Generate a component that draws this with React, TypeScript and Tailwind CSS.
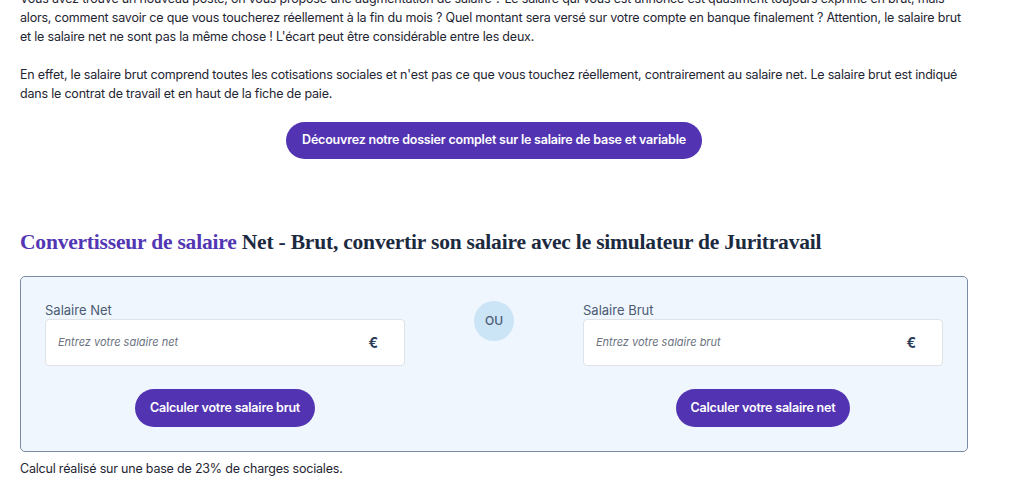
const body = "font-['Inter','Liberation_Sans',sans-serif]";

const SalaryField = ({ label, placeholder, action }: { label: string; placeholder: string; action: string }) => (
  <div className="flex w-[360px] flex-col">
    <label className="text-[13px] leading-[17px] text-[#4b5a74]">{label}</label>
    <div className="flex h-[47px] items-center justify-between rounded-[4px] border border-[#dfe3e8] bg-white pl-[12px] pr-[26px]">
      <span className="text-[11px] italic text-[#6b7280]">{placeholder}</span>
      <span className="text-[14px] font-bold text-[#2d3d5a]">€</span>
    </div>
    <button className="mx-auto mt-[23px] h-[38px] rounded-full bg-[#5234b2] px-[15px] text-[12.5px] font-semibold tracking-[-0.2px] text-white">
      {action}
    </button>
  </div>
);

export default function App() {
  return (
    <div className={`${body} bg-white px-[20px] pb-[20px] text-[12.5px] tracking-[-0.2px] text-[#1f2633]`}>
      <div className="w-[948px]">
        <p className="-mt-[11px] leading-[19px]">
          Vous avez trouvé un nouveau poste, on vous propose une augmentation de salaire ? Le salaire qui vous est annoncé est quasiment toujours exprimé en brut, mais alors, comment savoir ce que vous toucherez réellement à la fin du mois ? Quel montant sera versé sur votre compte en banque finalement ? Attention, le salaire brut et le salaire net ne sont pas la même chose ! L'écart peut être considérable entre les deux.
        </p>
        <p className="mt-[19px] leading-[19px]">
          En effet, le salaire brut comprend toutes les cotisations sociales et n'est pas ce que vous touchez réellement, contrairement au salaire net. Le salaire brut est indiqué dans le contrat de travail et en haut de la fiche de paie.
        </p>
        <div className="mt-[19px] flex justify-center">
          <button className="h-[37px] rounded-full bg-[#5234b2] px-[16px] text-[12.5px] font-semibold tracking-[-0.2px] text-white">
            Découvrez notre dossier complet sur le salaire de base et variable
          </button>
        </div>

        <h2 className="mt-[69px] font-['Liberation_Serif',serif] text-[21.5px] font-bold leading-[28px] tracking-[-0.2px] text-[#1c2a40]">
          <span className="text-[#5236b3]">Convertisseur de salaire</span> Net - Brut, convertir son salaire avec le simulateur de Juritravail
        </h2>

        <div className="mt-[20px] flex items-start justify-between rounded-[5px] border border-[#7b8aa5] bg-[#eff6fd] px-[24px] pt-[25px] pb-[24px] tracking-normal">
          <SalaryField label="Salaire Net" placeholder="Entrez votre salaire net" action="Calculer votre salaire brut" />
          <div className="mt-[-1px] flex h-[40px] w-[40px] items-center justify-center rounded-full bg-[#cbe4f6] text-[12px] font-medium text-[#4a5a72]">
            OU
          </div>
          <SalaryField label="Salaire Brut" placeholder="Entrez votre salaire brut" action="Calculer votre salaire net" />
        </div>

        <p className="mt-[7px] leading-[19px]">Calcul réalisé sur une base de 23% de charges sociales.</p>
      </div>
    </div>
  );
}
